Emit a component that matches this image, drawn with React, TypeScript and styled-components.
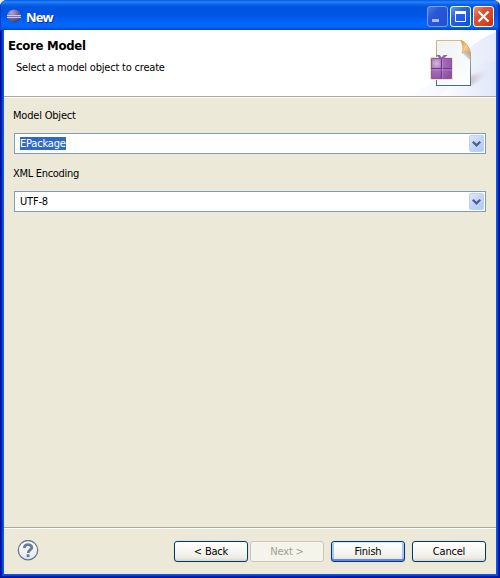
import React from "react";
import styled, { createGlobalStyle, css } from "styled-components";

const GlobalStyle = createGlobalStyle`
  * { box-sizing: border-box; }
  html, body { margin: 0; padding: 0; background: #ece9d8; overflow: hidden; }
`;

const Window = styled.div`
  width: 500px;
  height: 578px;
  display: flex;
  flex-direction: column;
  font-family: "DejaVu Sans Condensed", "DejaVu Sans", sans-serif;
  font-stretch: condensed;
  font-size: 11px;
  line-height: 14px;
  color: #000;
  background: #0831d9;
  border-radius: 7px 7px 0 0;
  overflow: hidden;
`;

const TitleBar = styled.header`
  height: 30px;
  flex: none;
  display: flex;
  align-items: center;
  padding: 3px 6px 0 6px;
  background: linear-gradient(
    #0058e6 0, #2a83f5 2px, #1268ee 4px, #0058e3 6px, #0054e0 9px,
    #0055e5 15px, #0064fb 22px, #0067ff 26px, #005cf0 28px, #0043cf 30px
  );
  box-shadow: inset 1px 0 #0a3ad0, inset -2px 0 #0634b8;
`;

const Title = styled.h1`
  flex: 1;
  margin: 0 0 0 4px;
  font: bold 13px/16px "Open Sans", sans-serif;
  letter-spacing: -0.9px;
  color: #fff;
  text-shadow: 1px 1px 0 #0b2a8c;
`;

const Controls = styled.div`
  display: flex;
  gap: 2px;
`;

const ControlButton = styled.button<{ $kind: "minimize" | "maximize" | "close" }>`
  width: 21px;
  height: 21px;
  padding: 0;
  border: 1px solid #fff;
  border-radius: 3px;
  display: block;
  ${({ $kind }) =>
    $kind === "close"
      ? css`background: linear-gradient(135deg, #ee9277 0, #e0512e 35%, #d9441f 70%, #bb3010 100%);`
      : $kind === "maximize"
      ? css`background: linear-gradient(135deg, #6b96f5 0, #2c63e4 35%, #1f5ae4 65%, #0a4ed6 100%);`
      : css`
          border-color: #7c9bea;
          background: linear-gradient(135deg, #5379df 0, #2958d4 35%, #1e51d4 100%);
        `}
  svg { display: block; }
`;

const Client = styled.main`
  flex: 1;
  min-height: 0;
  margin: 0 4px 4px;
  display: flex;
  flex-direction: column;
  background: #ece9d8;
  box-shadow: 0 0 0 1px #0855f0, 0 0 0 2px #0646e0, 0 0 0 3px #0020b8, 0 0 0 4px #00138c;
  clip-path: inset(0 -4px -4px -4px);
`;

const Banner = styled.section`
  height: 68px;
  flex: none;
  display: flex;
  justify-content: space-between;
  background: #fff;
  border-bottom: 1px solid #fff;
  box-shadow: inset 0 -1px #aca899;
`;

const BannerText = styled.div`
  padding: 8px 0 0 4px;
`;

const Heading = styled.h2`
  margin: 0;
  font: bold 13px/16px "DejaVu Sans Condensed", "DejaVu Sans", sans-serif;
  font-stretch: condensed;
  letter-spacing: -0.28px;
`;

const Text = styled.span<{ $spacing?: number }>`
  letter-spacing: ${({ $spacing }) => $spacing ?? -0.2}px;
  white-space: pre;
`;

const Description = styled.p`
  margin: 7px 0 0 8px;
`;

const Form = styled.section`
  flex: 1;
  display: flex;
  flex-direction: column;
  padding: 11px 10px 0;
`;

const Field = styled.div`
  height: 58px;
`;

const Label = styled.div`
  height: 24px;
  margin-left: -1px;
`;

const Combo = styled.div`
  height: 21px;
  width: 472px;
  display: flex;
  align-items: center;
  justify-content: space-between;
  padding: 1px 1px 1px 5px;
  background: #fff;
  border: 1px solid #7f9db9;
`;

const Value = styled.span<{ $selected?: boolean }>`
  height: 13px;
  line-height: 13px;
  white-space: nowrap;
  ${({ $selected }) => $selected && css`background: #316ac5; color: #fff;`}
`;

const DropButton = styled.span`
  width: 15px;
  height: 17px;
  border-radius: 2px;
  border: 1px solid #bdd0fb;
  background: linear-gradient(135deg, #dce7ff, #c3d3fd 50%, #b4c8f8);
  svg { display: block; }
`;

const Footer = styled.footer`
  height: 47px;
  flex: none;
  display: flex;
  align-items: flex-start;
  padding: 12px 10px 0 13px;
  border-top: 1px solid #aca899;
  box-shadow: inset 0 1px #fff;
`;

const Spacer = styled.div`
  flex: 1;
`;

const PushButton = styled.button<{ $tone?: "primary" | "disabled"; $gap?: number }>`
  width: 74px;
  height: 21px;
  margin: 1px 0 0 ${({ $gap }) => $gap ?? 7}px;
  padding: 1px 0 0;
  font: inherit;
  line-height: 18px;
  color: #000;
  border: 1px solid #003c74;
  border-radius: 3px;
  background: linear-gradient(#fff, #f4f3ee 60%, #ecebe5 85%, #d8d0c4);
  box-shadow: 0 0 0 1px #e6e3d3;
  ${({ $tone }) =>
    $tone === "disabled" &&
    css`
      color: #a1a192;
      border-color: #c9c7ba;
      background: #f5f4ea;
      box-shadow: none;
    `}
  ${({ $tone }) =>
    $tone === "primary" &&
    css`
      box-shadow: 0 0 0 1px #e6e3d3, inset 0 1px #cee7ff, inset 0 -2px #6982ee,
        inset 2px 0 #a9c5f5, inset -2px 0 #a9c5f5;
    `}
`;

const EclipseIcon = () => (
  <svg width="16" height="16" viewBox="0 0 16 16">
    <defs>
      <radialGradient id="orb" cx=".35" cy=".25" r=".8">
        <stop offset="0" stopColor="#b0a6d6" />
        <stop offset=".5" stopColor="#736aa9" />
        <stop offset="1" stopColor="#443b7c" />
      </radialGradient>
    </defs>
    <ellipse cx="8" cy="7" rx="7" ry="6.5" fill="url(#orb)" />
    <path d="M1 6.5h14M1 8.5h14" stroke="#c9cbea" strokeWidth="1" />
    <path d="M1.5 7.5h13" stroke="#7773b5" />
  </svg>
);

const BannerArt = () => (
  <svg width="92" height="66" viewBox="404 30 92 66">
    <defs>
      <linearGradient id="swoosh" x1="0" x2="1" y1=".5" y2=".5">
        <stop offset="0" stopColor="#fff" />
        <stop offset=".5" stopColor="#f0f3fd" />
        <stop offset="1" stopColor="#dce4f7" />
      </linearGradient>
      <linearGradient id="sheet" x1="0" y1="0" x2="1" y2="1">
        <stop offset="0" stopColor="#eef3f6" />
        <stop offset=".6" stopColor="#f6f9fa" />
        <stop offset="1" stopColor="#fff" />
      </linearGradient>
      <linearGradient id="sheetEdge" x1="0" y1="0" x2="0" y2="1">
        <stop offset="0" stopColor="#dfb77d" />
        <stop offset=".5" stopColor="#9c9d82" />
        <stop offset="1" stopColor="#456f73" />
      </linearGradient>
      <linearGradient id="fold" x1="0" y1="0" x2="1" y2="1">
        <stop offset="0" stopColor="#d98c32" />
        <stop offset=".5" stopColor="#f8cc8e" />
        <stop offset="1" stopColor="#dc9a48" />
      </linearGradient>
      <radialGradient id="gift" cx=".25" cy=".25" r=".9">
        <stop offset="0" stopColor="#d6b9df" />
        <stop offset=".4" stopColor="#a16db8" />
        <stop offset="1" stopColor="#8b50a6" />
      </radialGradient>
      <linearGradient id="shade" x1="0" y1="0" x2="1" y2="0">
        <stop offset="0" stopColor="#c8bdd0" />
        <stop offset="1" stopColor="#e4e6f5" stopOpacity="0" />
      </linearGradient>
      <linearGradient id="foldShade" x1="0" y1="1" x2="1" y2="0">
        <stop offset="0.3" stopColor="#dfe4e8" />
        <stop offset="1" stopColor="#929ca3" />
      </linearGradient>
      <filter id="soft" x="-20%" y="-40%" width="140%" height="180%">
        <feGaussianBlur stdDeviation="1.6" />
      </filter>
    </defs>
    <path d="M404 96C436 92 455 48 496 32V96z" fill="url(#swoosh)" opacity=".75" />
    <path d="M440 96C456 78 470 65 496 60V96z" fill="url(#swoosh)" opacity=".7" />
    <path d="M470 76L492 69L486 76L470 86z" fill="url(#shade)" filter="url(#soft)" />
    <path d="M436.5 40.5H461.5Q468 43 470.5 53V85.5H436.5z" fill="url(#sheet)" stroke="url(#sheetEdge)" />
    <path d="M436 85.5H471" stroke="#456f73" />
    <path d="M462 53L466 51L470 53V60z" fill="url(#foldShade)" />
    <path d="M460.5 40.5C463 44 463.5 49 462 53C465 50.5 468 51 470.5 54.5C470 48 466 42 460.5 40.5z" fill="url(#fold)" stroke="#e1a65e" strokeWidth=".7" />
    <path d="M430.5 57.5H452.5V79.5H430.5z" fill="#fff" stroke="#f3dfb9" />
    <path d="M431.5 58.5H451.5V78.5H431.5z" fill="url(#gift)" stroke="#8f55a8" />
    <path d="M441.5 58V79M431 68.5H452" stroke="#74368f" strokeWidth="1.2" />
    <path d="M442.5 59V79M431 70H452" stroke="#bd92cc" strokeWidth=".6" />
    <path d="M441.5 59L437.5 55.5L439.5 55.5L441.5 58.5L444 55.5L446 55.5L442 59" fill="none" stroke="#995ca9" strokeWidth="1.2" />
  </svg>
);

const DropArrow = () => (
  <svg width="13" height="15" viewBox="0 0 13 15">
    <path d="M2.8 5.8L6.5 9.4L10.2 5.8" fill="none" stroke="#4d6185" strokeWidth="2.2" />
  </svg>
);

const HelpIcon = () => (
  <svg width="22" height="22" viewBox="0 0 22 22">
    <defs>
      <linearGradient id="help" x1="0" y1="0" x2="0" y2="1">
        <stop offset="0" stopColor="#fff" />
        <stop offset="1" stopColor="#e6e6ea" />
      </linearGradient>
    </defs>
    <circle cx="11" cy="10.2" r="9.7" fill="url(#help)" stroke="#64779b" strokeWidth="1.3" />
    <path d="M7.3 8.1C7.4 3.6 14.9 3.7 14.8 7.6C14.7 10 11.2 10 11.2 13" fill="none" stroke="#667b9f" strokeWidth="2.7" />
    <circle cx="11.1" cy="15.7" r="1.6" fill="#667b9f" />
  </svg>
);

export default function App() {
  return (
    <>
      <GlobalStyle />
      <Window>
        <TitleBar>
          <EclipseIcon />
          <Title>New</Title>
          <Controls>
            <ControlButton $kind="minimize" aria-label="Minimize">
              <svg width="19" height="19"><path d="M4 13.5h7" stroke="#a9bdf3" strokeWidth="3" /></svg>
            </ControlButton>
            <ControlButton $kind="maximize" aria-label="Maximize">
              <svg width="19" height="19">
                <path d="M4.5 5v9.5h10V5" fill="none" stroke="#fff" />
                <path d="M4 5.5h11" stroke="#fff" strokeWidth="3" />
              </svg>
            </ControlButton>
            <ControlButton $kind="close" aria-label="Close">
              <svg width="19" height="19"><path d="M4.5 4.5l10 10M14.5 4.5l-10 10" stroke="#fff" strokeWidth="2.2" /></svg>
            </ControlButton>
          </Controls>
        </TitleBar>
        <Client>
          <Banner>
            <BannerText>
              <Heading>Ecore Model</Heading>
              <Description><Text>Select a model object to create</Text></Description>
            </BannerText>
            <BannerArt />
          </Banner>
          <Form>
            <Field>
              <Label><Text>Model Object</Text></Label>
              <Combo>
                <Value $selected><Text>EPackage</Text></Value>
                <DropButton><DropArrow /></DropButton>
              </Combo>
            </Field>
            <Field>
              <Label><Text $spacing={-0.3}>XML Encoding</Text></Label>
              <Combo>
                <Value><Text>UTF-8</Text></Value>
                <DropButton><DropArrow /></DropButton>
              </Combo>
            </Field>
          </Form>
          <Footer>
            <HelpIcon />
            <Spacer />
            <PushButton><Text>{"< Back"}</Text></PushButton>
            <PushButton $tone="disabled" $gap={2} disabled><Text>{"Next >"}</Text></PushButton>
            <PushButton $tone="primary"><Text>Finish</Text></PushButton>
            <PushButton><Text>Cancel</Text></PushButton>
          </Footer>
        </Client>
      </Window>
    </>
  );
}
